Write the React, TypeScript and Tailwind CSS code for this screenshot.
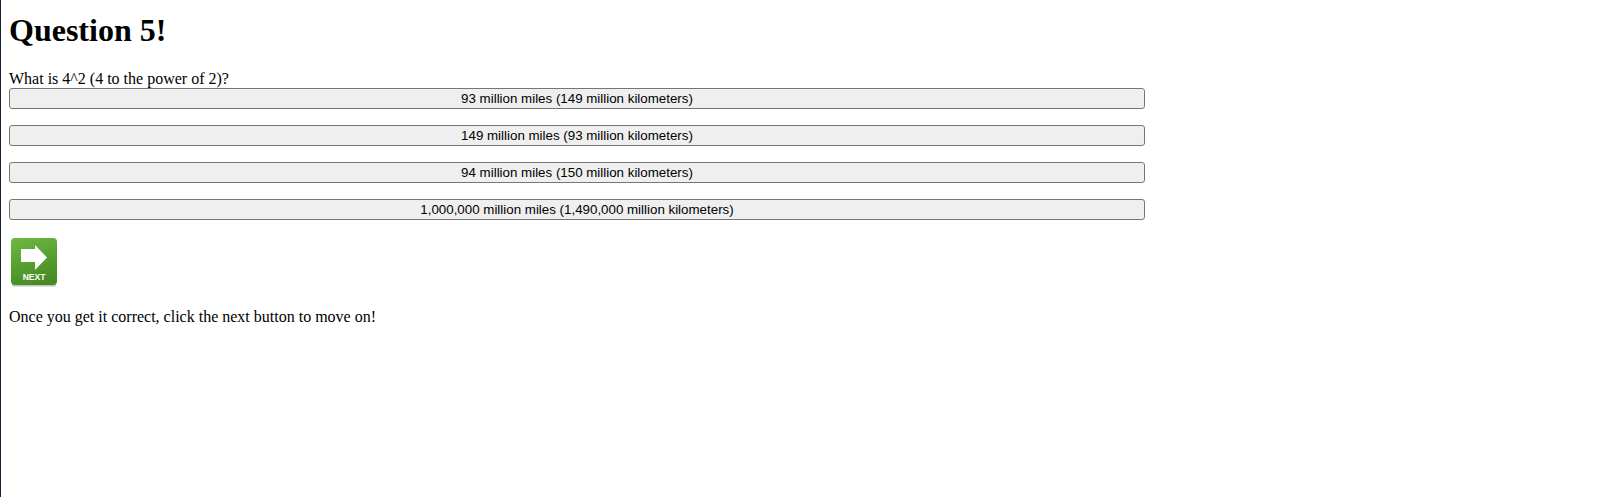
const answers = [
  '93 million miles (149 million kilometers)',
  '149 million miles (93 million kilometers)',
  '94 million miles (150 million kilometers)',
  '1,000,000 million miles (1,490,000 million kilometers)',
];

function NextIcon() {
  return (
    <div className="relative h-[50px] w-[50px]">
      <svg width="50" height="50" viewBox="0 0 50 50">
        <defs>
          <linearGradient id="nextGreen" x1="0.2" y1="0" x2="0.5" y2="1">
            <stop offset="0" stopColor="#6fb543" />
            <stop offset="0.55" stopColor="#559f2e" />
            <stop offset="1" stopColor="#478c22" />
          </linearGradient>
        </defs>
        <rect x="3" y="46" width="44" height="3.5" rx="1.5" fill="#c4c4c4" />
        <rect x="2" y="1" width="46" height="47" rx="4" fill="url(#nextGreen)" />
        <path d="M12 12 H26 V8 L38 20.5 L26 33 V25 H12 Z" fill="#fff" />
      </svg>
      <span className="absolute top-[35px] left-0 w-full text-center font-['Liberation_Sans',sans-serif] text-[8.5px] leading-[10px] font-bold text-white">
        NEXT
      </span>
    </div>
  );
}

export default function App() {
  return (
    <div className="min-h-[497px] border-l border-[#1a2238] bg-white pl-[8px] font-['Liberation_Serif',serif] text-base leading-[18px] text-black">
      <h1 className="pt-[12px] pb-[21px] text-[32px] leading-[37px] font-bold">Question 5!</h1>
      <p>What is 4^2 (4 to the power of 2)?</p>
      {answers.map((a) => (
        <button
          key={a}
          className="mb-4 block h-[21px] w-[1136px] rounded-[3px] border border-[#767676] bg-[#efefef] text-center font-['Liberation_Sans',sans-serif] text-[13.33px] leading-none text-black"
        >
          {a}
        </button>
      ))}
      <div className="pt-[1px] pb-[21px]">
        <NextIcon />
      </div>
      <p>Once you get it correct, click the next button to move on!</p>
    </div>
  );
}
